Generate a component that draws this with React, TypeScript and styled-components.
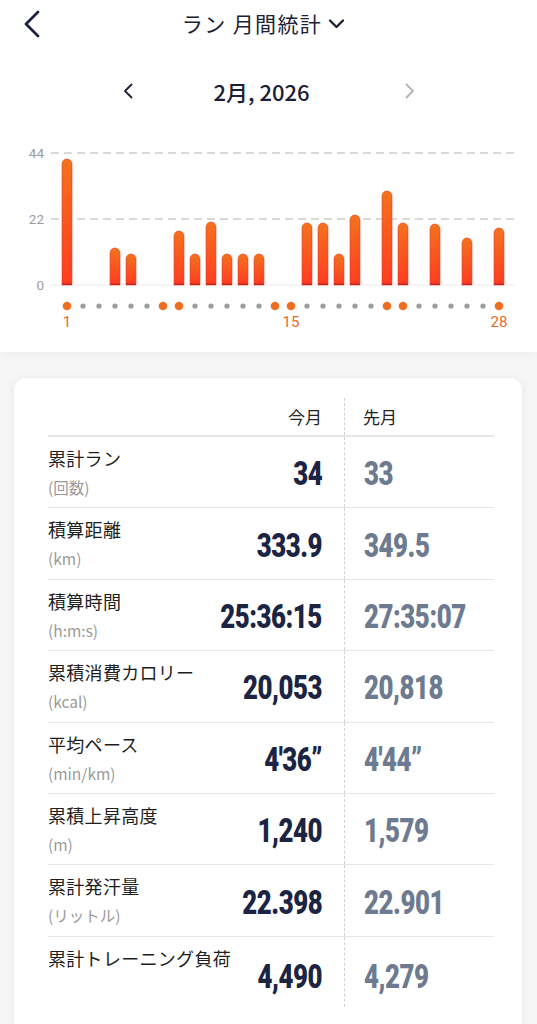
import React from "react";
import styled, { createGlobalStyle } from "styled-components";

const Global = createGlobalStyle`
  html, body { margin: 0; padding: 0; background: #f6f6f6; }
  body { font-family: "Noto Sans CJK JP", "Noto Sans", sans-serif; -webkit-font-smoothing: antialiased; }
  * { box-sizing: border-box; }
`;

const Page = styled.div`
  width: 537px;
  min-height: 1024px;
  background: #f6f6f6;
`;

const Top = styled.div`
  background: #ffffff;
  box-shadow: 0 3px 10px rgba(0, 0, 0, 0.04);
  position: relative;
`;

const Header = styled.div`
  height: 46px;
  display: grid;
  grid-template-columns: 60px 1fr 60px;
  align-items: center;
`;

const BackBtn = styled.div`
  padding-left: 23px;
  display: flex;
  align-items: center;
  padding-top: 1px;
`;

const Title = styled.div`
  display: flex;
  align-items: center;
  justify-content: center;
  gap: 6px;
  font-size: 21px;
  color: #1c2034;
  letter-spacing: 1.4px;
  margin-left: -10px;
`;

const Nav = styled.div`
  height: 84px;
  display: flex;
  align-items: center;
  justify-content: center;
  padding-top: 6px;
`;

const NavArrow = styled.div<{ $side: "l" | "r" }>`
  width: 10px;
  display: flex;
  align-items: center;
  margin-left: ${(p) => (p.$side === "r" ? "90px" : "0")};
  margin-right: ${(p) => (p.$side === "l" ? "76px" : "0")};
`;

const MonthLabel = styled.div`
  font-family: "Noto Sans CJK JP", "Noto Sans", sans-serif;
  font-size: 22px;
  font-weight: 500;
  color: #1c2034;
  width: 106px;
  text-align: center;
  white-space: nowrap;
`;

const ChartSvg = styled.svg`
  display: block;
`;

const Card = styled.div`
  margin: 26px 15px 0 14px;
  background: #ffffff;
  border-radius: 12px 12px 0 0;
  box-shadow: 0 0 10px rgba(0, 0, 0, 0.06);
  padding: 20px 28px 40px 34px;
`;

const Row = styled.div<{ $head?: boolean }>`
  display: flex;
  height: ${(p) => (p.$head ? "38px" : "71.4px")};
  border-bottom: ${(p) => (p.$head ? "1.5px solid #e6e6e6" : "none")};
  & + & {
    border-top: 1.5px solid #e6e6e6;
  }
`;

const Head = styled.div<{ $side: "cur" | "prev" }>`
  font-size: 17px;
  color: #222;
  display: flex;
  align-items: center;
  ${(p) =>
    p.$side === "cur"
      ? "flex: 1; justify-content: flex-end; padding-right: 22px;"
      : "width: 150px; padding-left: 18px; border-left: 1.5px dashed #d2d2d2;"}
`;

const LabelBox = styled.div`
  flex: 1;
  min-width: 0;
  white-space: nowrap;
  padding-top: 9px;
  display: flex;
  flex-direction: column;
`;

const Label = styled.div`
  font-size: 18px;
  line-height: 24px;
  letter-spacing: 0.3px;
  color: #1e1e1e;
`;

const Sub = styled.div`
  font-size: 15.5px;
  line-height: 22px;
  margin-top: 6px;
  color: #9a9a9a;
`;

const ValCell = styled.div<{ $side: "cur" | "prev"; $last?: boolean }>`
  display: flex;
  align-items: center;
  padding-top: ${(p) => (p.$last ? "8px" : "2px")};
  ${(p) =>
    p.$side === "cur"
      ? "flex: none; justify-content: flex-end; padding-right: 22px;"
      : "width: 150px; padding-left: 19px; border-left: 1.5px dashed #d2d2d2;"}
`;

const Num = styled.span<{ $side: "cur" | "prev" }>`
  display: inline-block;
  font-family: Roboto, "Liberation Sans", sans-serif;
  font-weight: 900;
  font-size: 34px;
  line-height: 34px;
  letter-spacing: -0.6px;
  white-space: nowrap;
  color: ${(p) => (p.$side === "cur" ? "#1b2443" : "#6d7a90")};
  transform: scaleX(0.76);
  transform-origin: ${(p) => (p.$side === "cur" ? "right" : "left")} center;
`;

const bars: Record<number, number> = {
  1: 126, 4: 37, 5: 31, 8: 54, 9: 31, 10: 63, 11: 31, 12: 31, 13: 31,
  16: 62, 17: 62, 18: 31, 19: 70, 21: 94, 22: 62, 24: 61, 26: 47, 28: 57,
};
const weekend = new Set([1, 7, 8, 14, 15, 21, 22, 28]);

const rows = [
  { label: "累計ラン", sub: "(回数)", cur: "34", prev: "33" },
  { label: "積算距離", sub: "(km)", cur: "333.9", prev: "349.5" },
  { label: "積算時間", sub: "(h:m:s)", cur: "25:36:15", prev: "27:35:07" },
  { label: "累積消費カロリー", sub: "(kcal)", cur: "20,053", prev: "20,818" },
  { label: "平均ペース", sub: "(min/km)", cur: "4'36\u201D", prev: "4'44\u201D" },
  { label: "累積上昇高度", sub: "(m)", cur: "1,240", prev: "1,579" },
  { label: "累計発汗量", sub: "(リットル)", cur: "22.398", prev: "22.901" },
  { label: "累計トレーニング負荷", sub: "", cur: "4,490", prev: "4,279" },
];

function Chart() {
  const base = 155;
  const xs = (d: number) => 67 + 16 * (d - 1);
  return (
    <ChartSvg width={537} height={222} viewBox="0 0 537 222">
      <defs>
        <linearGradient id="bg" x1="0" y1="0" x2="0" y2="1">
          <stop offset="0" stopColor="#f2731f" />
          <stop offset="1" stopColor="#ff3b22" />
        </linearGradient>
      </defs>
      <g fontFamily="Roboto, 'Liberation Sans', sans-serif" fontSize="13.5" fill="#9c9c9c" textAnchor="end">
        <text x="44" y="28">44</text>
        <text x="44" y="94">22</text>
        <text x="44" y="160">0</text>
      </g>
      <line x1="51" x2="515" y1="23" y2="23" stroke="#cdcdcd" strokeWidth="1.3" strokeDasharray="8 5" />
      <line x1="51" x2="515" y1="89" y2="89" stroke="#cdcdcd" strokeWidth="1.3" strokeDasharray="8 5" />
      <line x1="51" x2="515" y1={base} y2={base} stroke="#ececec" strokeWidth="1.2" />
      {Object.entries(bars).map(([d, h]) => {
        const x = xs(Number(d)) - 5;
        const y = base - h;
        return (
          <g key={d}>
            <path
              d={`M${x} ${base} V${y + 5} a5 5 0 0 1 10 0 V${base} Z`}
              fill="url(#bg)"
              stroke="#e8401f"
              strokeWidth="0.6"
            />
            <rect x={x} y={base - 1.5} width={10} height={1.5} fill="#c8261a" />
          </g>
        );
      })}
      {Array.from({ length: 28 }, (_, i) => i + 1).map((d) =>
        weekend.has(d) ? (
          <circle key={d} cx={xs(d)} cy={176} r={4.3} fill="#ef6f22" />
        ) : (
          <circle key={d} cx={xs(d)} cy={176} r={2.6} fill="#9b9b9b" />
        )
      )}
      <g fontFamily="Roboto, 'Liberation Sans', sans-serif" fontSize="15" fill="#e8691f" textAnchor="middle">
        <text x={xs(1)} y="197">1</text>
        <text x={xs(15)} y="197">15</text>
        <text x={xs(28)} y="197">28</text>
      </g>
    </ChartSvg>
  );
}

export default function App() {
  return (
    <Page>
      <Global />
      <Top>
        <Header>
          <BackBtn>
            <svg width="18" height="28" viewBox="0 0 18 28">
              <path d="M15 2 L3 14 L15 26" fill="none" stroke="#1b2140" strokeWidth="2.8" strokeLinecap="round" strokeLinejoin="round" />
            </svg>
          </BackBtn>
          <Title>
            <span>ラン 月間統計</span>
            <svg width="17" height="11" viewBox="0 0 17 11">
              <path d="M2 2.5 L8.5 9 L15 2.5" fill="none" stroke="#1c2034" strokeWidth="2.3" strokeLinecap="round" strokeLinejoin="round" />
            </svg>
          </Title>
          <div />
        </Header>
        <Nav>
          <NavArrow $side="l">
            <svg width="10" height="16" viewBox="0 0 10 16">
              <path d="M8.5 1.5 L2 8 L8.5 14.5" fill="none" stroke="#1c2034" strokeWidth="1.8" strokeLinecap="round" strokeLinejoin="round" />
            </svg>
          </NavArrow>
          <MonthLabel>2月, 2026</MonthLabel>
          <NavArrow $side="r">
            <svg width="10" height="16" viewBox="0 0 10 16">
              <path d="M1.5 1.5 L8 8 L1.5 14.5" fill="none" stroke="#b4b4b4" strokeWidth="1.8" strokeLinecap="round" strokeLinejoin="round" />
            </svg>
          </NavArrow>
        </Nav>
        <Chart />
      </Top>
      <Card>
        <Row $head>
          <Head $side="cur">今月</Head>
          <Head $side="prev">先月</Head>
        </Row>
        {rows.map((r, i) => (
          <Row key={r.label}>
            <LabelBox>
              <Label>{r.label}</Label>
              {r.sub && <Sub>{r.sub}</Sub>}
            </LabelBox>
            <ValCell $side="cur" $last={i === rows.length - 1}>
              <Num $side="cur">{r.cur}</Num>
            </ValCell>
            <ValCell $side="prev" $last={i === rows.length - 1}>
              <Num $side="prev">{r.prev}</Num>
            </ValCell>
          </Row>
        ))}
      </Card>
    </Page>
  );
}
